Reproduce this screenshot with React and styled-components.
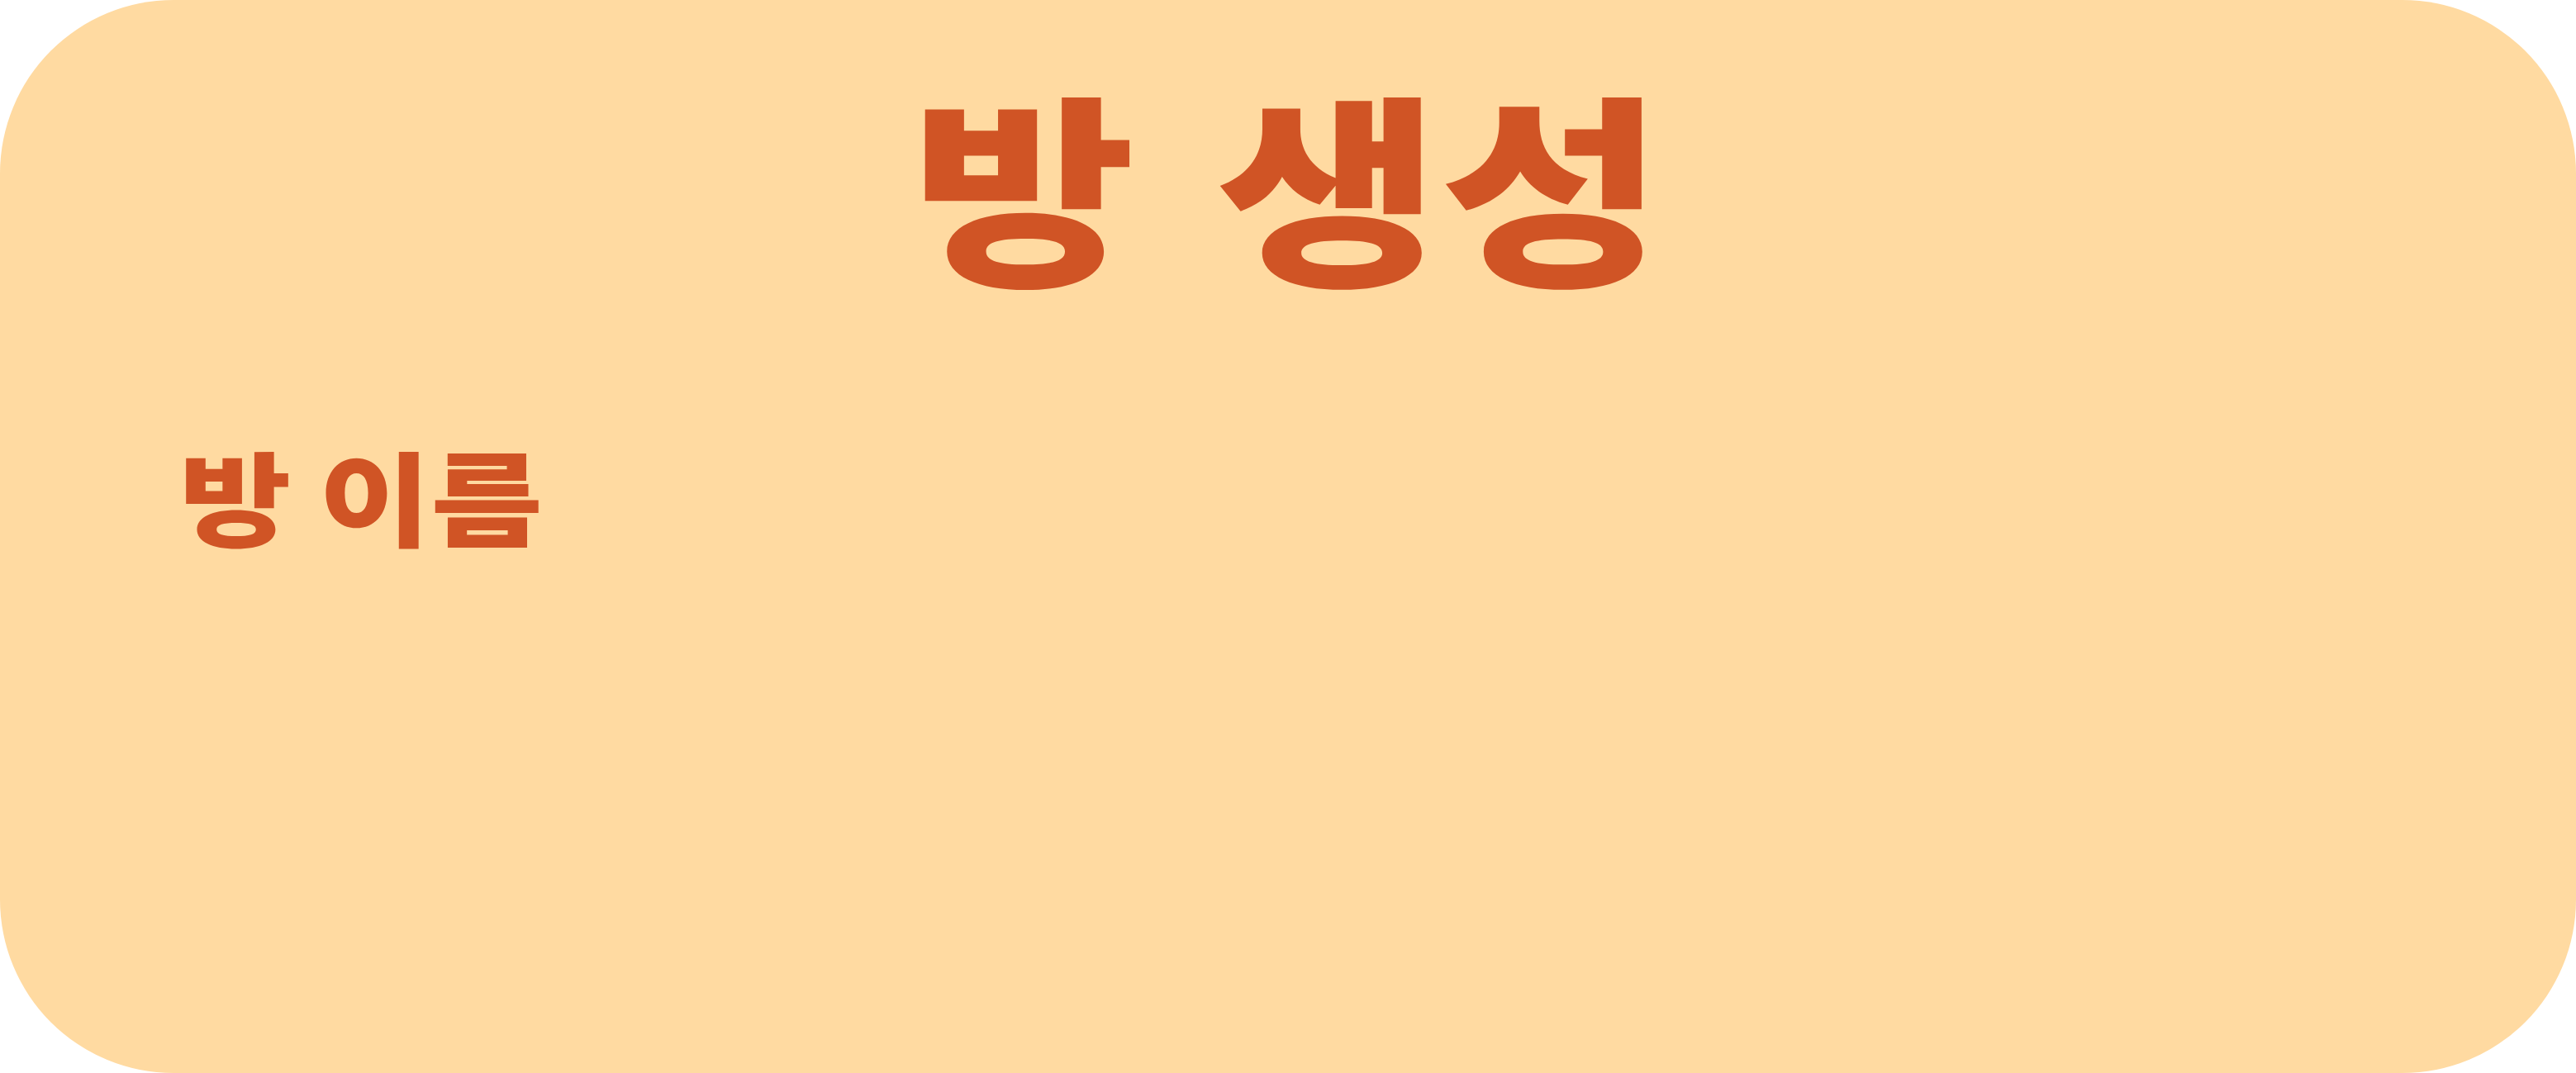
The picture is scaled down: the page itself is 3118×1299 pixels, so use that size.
import styled, { createGlobalStyle } from "styled-components";

// GLOBAL RESET
const GlobalStyle = createGlobalStyle`
  * {
    box-sizing: border-box;
  }
  body {
    margin: 0;
    background: #ffffff;
    font-family: "Noto Sans CJK KR", "Noto Sans", sans-serif;
  }
`;

// STYLING WITH STYLED COMPONENTS
const Panel = styled.div`
  width: 3118px;
  height: 1299px;
  border-radius: 210px;
  background-color: #ffdaa1;
  display: flex;
  flex-direction: column;
  padding-top: 95px;
  overflow: hidden;
`;

// rounded wide display face is not installed, so widen the heavy sans a bit
const Title = styled.h1`
  align-self: center;
  margin: 0;
  font-size: 248px;
  font-weight: 900;
  line-height: 1;
  word-spacing: 26px;
  color: #d05425;
  transform: scaleX(1.187);
`;

const Field = styled.div`
  display: flex;
  flex-direction: column;
  align-items: flex-start;
  margin-top: 193px;
  padding-left: 217px;
`;

const Label = styled.label`
  font-size: 124px;
  font-weight: 900;
  line-height: 1;
  color: #d05425;
  transform: scaleX(1.187);
  transform-origin: left center;
`;

// CREATE ROOM PAGE
export default function App() {
  return (
    <>
      <GlobalStyle />
      <Panel>
        <Title>방 생성</Title>
        <Field>
          <Label>방 이름</Label>
        </Field>
      </Panel>
    </>
  );
}
